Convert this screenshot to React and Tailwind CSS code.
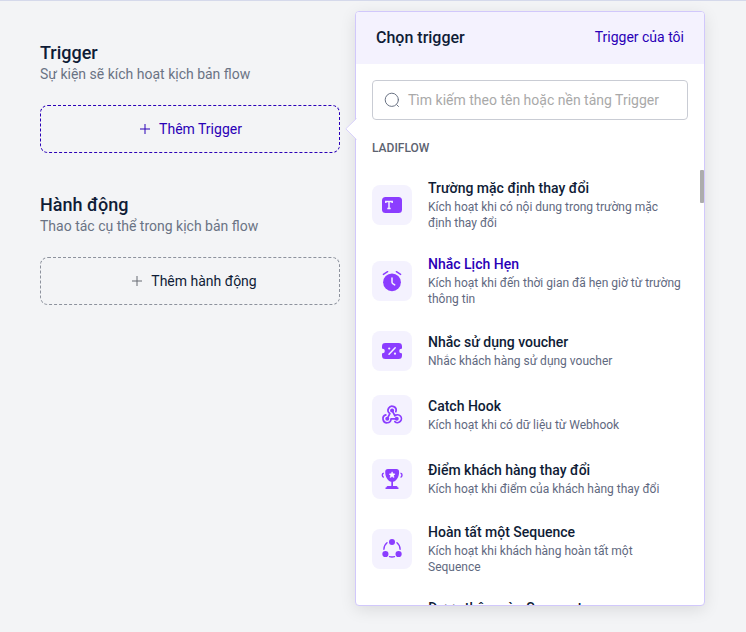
import React from 'react';

const Tile = ({ children }) => (
  <div className="flex h-10 w-10 shrink-0 items-center justify-center rounded-lg bg-[#f4f2fe] text-[#8b3dff]">
    <svg width="24" height="24" viewBox="0 0 24 24" fill="none">{children}</svg>
  </div>
);

const FieldIcon = () => (
  <Tile>
    <rect x="2" y="4" width="20" height="16" rx="3.5" fill="currentColor" />
    <path d="M5.8 10V8.4h6.4V10M9 8.4v7.2M7.3 15.6h3.4" stroke="#f4f2fe" strokeWidth="1.5" />
  </Tile>
);

const AlarmIcon = () => (
  <Tile>
    <circle cx="12" cy="13.3" r="8.9" fill="currentColor" />
    <path d="M3.4 5.4 7.6 2.7M20.6 5.4l-4.2-2.7" stroke="currentColor" strokeWidth="1.5" strokeLinecap="round" />
    <path d="M12 9v4.2c0 .7.3 1 .8 1.4l1.9 1.3" stroke="#f4f2fe" strokeWidth="1.5" strokeLinecap="round" />
  </Tile>
);

const VoucherIcon = () => (
  <Tile>
    <path
      d="M5.5 4h13C21 4 22 5 22 7.5v1.7c0 .3-.2.5-.5.5a2.3 2.3 0 0 0 0 4.6c.3 0 .5.2.5.5v1.7c0 2.5-1 3.5-3.5 3.5h-13C3 20 2 19 2 16.5v-1.7c0-.3.2-.5.5-.5a2.3 2.3 0 0 0 0-4.6c-.3 0-.5-.2-.5-.5V7.5C2 5 3 4 5.5 4Z"
      fill="currentColor"
    />
    <path d="m9 15.2 6.200-6.4" stroke="#f4f2fe" strokeWidth="1.5" strokeLinecap="round" />
    <circle cx="9.2" cy="9.5" r="1.1" fill="#f4f2fe" />
    <circle cx="15" cy="14.7" r="1.1" fill="#f4f2fe" />
  </Tile>
);

const HookIcon = () => (
  <Tile>
    <g transform="translate(1 1.1) scale(.91)">
      <g stroke="currentColor" strokeWidth="1.9" strokeLinecap="round" strokeLinejoin="round">
        <path d="M16.3 8.300A4.400 4.400 0 1 0 9.700 10.400L7.100 15.700" />
        <path d="M5.3 11.900A4.400 4.400 0 1 0 11 16.300h6" />
        <path d="M12.3 7.200l3 5.600a4.300 4.300 0 1 1-.1 6.400" />
      </g>
      <circle cx="12.2" cy="6.9" r="2.200" fill="currentColor" />
      <circle cx="6.9" cy="16.1" r="2.200" fill="currentColor" />
      <circle cx="17.3" cy="16.1" r="2.200" fill="currentColor" />
    </g>
  </Tile>
);

const TrophyIcon = () => (
  <Tile>
    <path
      d="M8 2h8.400c1.800 0 2.800 1.200 2.700 3-.1 5.200-2.700 9.200-6.100 9.800v4.200h3.300c.6 0 1.100.4 1.300 1l.2.600h.7v1.400H5.500v-1.400h.8l.2-.6c.2-.6.700-1 1.300-1h3.500v-4.200C7.900 14.200 5.300 10.200 5.200 5 5.100 3.200 6.200 2 8 2Z"
      fill="currentColor"
    />
    <path d="M3.800 6.200c-2 .3-2 3.300-.1 4.300M20.500 6.200c2 .3 2 3.300.1 4.300" stroke="currentColor" strokeWidth="1.4" />
    <path
      d="m12.100 4.800.9 1.900 2.100.3-1.500 1.500.4 2.100-1.900-1-1.900 1 .4-2.100L9.100 7l2.100-.3.900-1.900Z"
      fill="#fff"
      stroke="#fff"
      strokeWidth=".5"
    />
  </Tile>
);

const SequenceIcon = () => (
  <Tile>
    <circle cx="12" cy="5.1" r="3" fill="currentColor" />
    <circle cx="5.4" cy="17" r="3.1" fill="currentColor" />
    <circle cx="18.6" cy="17" r="3.1" fill="currentColor" />
    <path
      d="M7 5.800a8.500 8.500 0 0 0-3.100 6.500M17 5.800a8.500 8.500 0 0 1 3.100 6.500M9.500 19.600c1.700.6 3.300.6 5 0"
      stroke="currentColor"
      strokeWidth="1.4"
      strokeLinecap="round"
    />
  </Tile>
);

const triggers = [
  { icon: FieldIcon, title: 'Trường mặc định thay đổi', lines: ['Kích hoạt khi có nội dung trong trường mặc', 'định thay đổi'] },
  { icon: AlarmIcon, title: 'Nhắc Lịch Hẹn', lines: ['Kích hoạt khi đến thời gian đã hẹn giờ từ trường', 'thông tin'], active: true },
  { icon: VoucherIcon, title: 'Nhắc sử dụng voucher', lines: ['Nhắc khách hàng sử dụng voucher'] },
  { icon: HookIcon, title: 'Catch Hook', lines: ['Kích hoạt khi có dữ liệu từ Webhook'] },
  { icon: TrophyIcon, title: 'Điểm khách hàng thay đổi', lines: ['Kích hoạt khi điểm của khách hàng thay đổi'] },
  { icon: SequenceIcon, title: 'Hoàn tất một Sequence', lines: ['Kích hoạt khi khách hàng hoàn tất một', 'Sequence'] },
];

const Plus = ({ className }) => (
  <svg className={className} width="10" height="10" viewBox="0 0 10 10" fill="none">
    <path d="M5 0v10M0 5h10" stroke="currentColor" strokeWidth="1" />
  </svg>
);

function TriggerPanel() {
  return (
    <div className="relative ml-[15px] mt-[10px] h-[595px] w-[350px] shrink-0 rounded border border-[#d1c8fb] bg-white shadow-[0_4px_16px_rgba(0,0,0,0.1)]">
      <svg className="absolute -left-[11px] top-[106px]" width="12" height="22" viewBox="0 0 12 22">
        <path d="M11.500.5.800 10.800 11.500 21.500" fill="#fff" stroke="#d9d2fb" />
      </svg>
      <div className="flex h-full flex-col overflow-hidden rounded-[3px]">
        <header className="flex h-[52px] shrink-0 items-center justify-between bg-[#f4f2fe] px-5">
          <h3 className="text-base font-medium text-[#0f1c36]">Chọn trigger</h3>
          <span className="pb-0.5 text-sm text-[#2a00b7]">Trigger của tôi</span>
        </header>
        <div className="mx-4 mt-4 flex h-10 shrink-0 items-center gap-2 rounded border border-[#c9ccd4] px-[11px]">
          <svg width="16" height="16" viewBox="0 0 16 16" fill="none" stroke="#6a7384" strokeLinecap="round">
            <circle cx="7.8" cy="7.8" r="6.6" />
            <path d="m12.700 12.700 1.800 1.800" />
          </svg>
          <span className="text-sm text-[#a9a9a9]">Tìm kiếm theo tên hoặc nền tảng Trigger</span>
        </div>
        <div className="mx-4 mt-5 h-4 shrink-0 text-xs leading-4 font-medium text-[#5c6270]">LADIFLOW</div>
        <div className="mt-[11px] flex min-h-0 flex-1 justify-between overflow-hidden">
          <ul className="pl-4">
            {triggers.map(({ icon: Icon, title, lines, active }) => (
              <li key={title} className="flex items-center gap-4 py-3">
                <Icon />
                <div className="whitespace-nowrap">
                  <div className={active ? 'h-5 text-sm leading-[18px] font-medium text-[#2a00b7]' : 'h-5 text-sm leading-[18px] font-medium text-[#0f1c36]'}>
                    {title}
                  </div>
                  {lines.map((line) => (
                    <div key={line} className="text-xs leading-4 text-[#5f6980]">{line}</div>
                  ))}
                </div>
              </li>
            ))}
            <li className="py-3 pl-14 text-sm leading-[18px] font-medium text-[#0f1c36]">Được thêm vào Segment</li>
          </ul>
          <div className="mt-[3px] h-[33px] w-1 shrink-0 rounded-[1px] bg-[#adadad]" />
        </div>
      </div>
    </div>
  );
}

export default function App() {
  return (
    <div className="flex h-[632px] w-[746px] items-start overflow-hidden border-t border-[#d5d9eb] bg-[#f3f4f6] pl-10 font-[Roboto,sans-serif]">
      <main className="flex w-[300px] shrink-0 flex-col gap-10 pt-10">
        <section>
          <h2 className="h-[23px] text-lg leading-6 font-medium text-[#0f1c36]">Trigger</h2>
          <p className="text-sm leading-5 text-[#6a7384]">Sự kiện sẽ kích hoạt kịch bản flow</p>
          <button className="mt-[21px] flex h-12 w-full items-center justify-center gap-[9px] rounded-lg border border-dashed border-[#2a00b7] pl-0.5 text-sm text-[#2a00b7]">
            <Plus className="text-[#2a00b7]" />
            Thêm Trigger
          </button>
        </section>
        <section>
          <h2 className="h-[23px] text-lg leading-6 font-medium text-[#0f1c36]">Hành động</h2>
          <p className="text-sm leading-5 text-[#6a7384]">Thao tác cụ thể trong kịch bản flow</p>
          <button className="mt-[21px] flex h-12 w-full items-center justify-center gap-[9px] rounded-lg border border-dashed border-[#8d929d] pl-[9px] text-sm text-[#0f1c36]">
            <Plus className="text-[#666b73]" />
            Thêm hành động
          </button>
        </section>
      </main>
      <TriggerPanel />
    </div>
  );
}
